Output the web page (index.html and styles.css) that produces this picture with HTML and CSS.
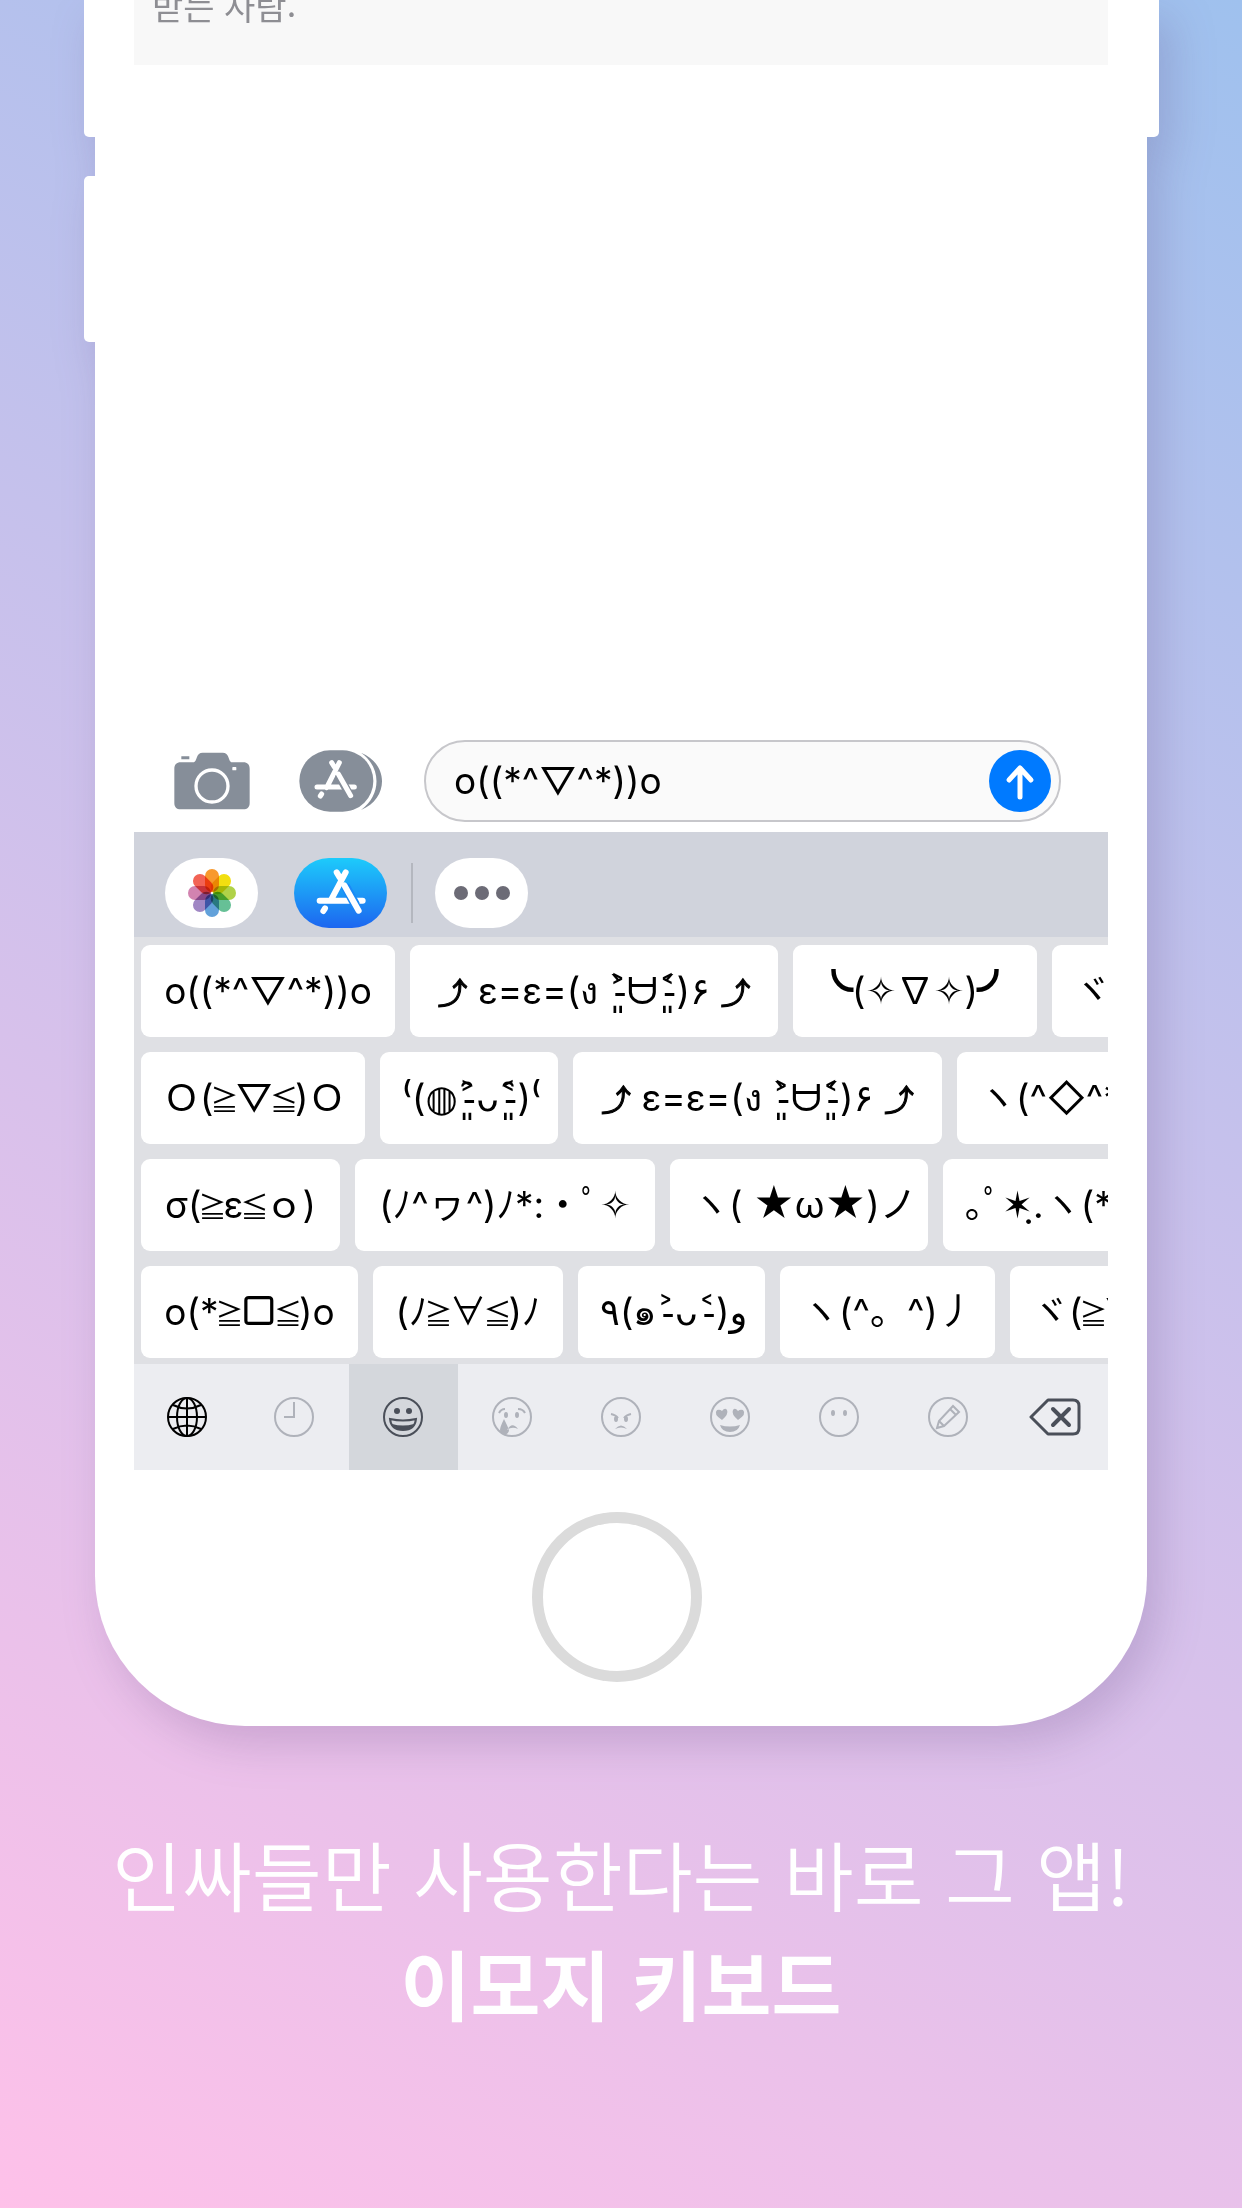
FILE: index.html
```html
<!DOCTYPE html>
<html lang="ko">
<head>
<meta charset="utf-8">
<meta name="viewport" content="width=device-width, initial-scale=1">
<title>이모지 키보드</title>
<link rel="stylesheet" href="styles.css">
</head>
<body>
<main class="promo">
  <section class="phone">
    <span class="side side-left side-top"></span>
    <span class="side side-left side-low"></span>
    <span class="side side-right side-top"></span>
    <div class="screen">
      <header class="recipient">받는 사람:</header>
      <div class="thread"></div>
      <form class="compose">
        <button type="button" class="plain" aria-label="카메라">
          <svg width="76" height="58" viewBox="0 0 228 172">
            <path fill="#868e99" d="M22 12h24v9H22zM20 30h38c6 0 8-8 11-16C72 6 76 1 86 1h60c10 0 14 5 17 13 3 8 5 16 11 16h34c12 0 19 7 19 19v103c0 12-7 19-19 19H20c-12 0-19-7-19-19V49c0-12 7-19 19-19z"/>
            <circle cx="114" cy="101" r="48" fill="none" stroke="#fff" stroke-width="10"/>
            <rect x="175" y="44" width="12" height="10" rx="2" fill="#fff"/>
          </svg>
        </button>
        <button type="button" class="plain" aria-label="앱">
          <svg width="84" height="62" viewBox="0 0 252 186">
            <path fill="#868e99" d="M186 8c84 34 84 138 0 172 62-44 62-128 0-172z"/>
            <rect x="1" y="1" width="222" height="184" rx="92" fill="#868e99"/>
            <g fill="none" stroke="#fff" stroke-width="15" stroke-linecap="round">
              <path d="M121 38L83 113M98 38L106 51M54 111H166M68 132L64 138"/>
              <path stroke="#868e99" stroke-width="25" d="M122 80L148 128"/>
              <path d="M118 72L155 137"/>
            </g>
          </svg>
        </button>
        <div class="field">
          <input type="text" aria-label="메시지" value="o((*^▽^*))o">
          <button type="submit" class="send" aria-label="보내기">
            <svg width="62" height="62" viewBox="0 0 62 62"><path d="M31 47V18M20 30L31 18L42 30" fill="none" stroke="#fff" stroke-width="5" stroke-linecap="round" stroke-linejoin="round"/></svg>
          </button>
        </div>
      </form>
      <nav class="apps">
        <button type="button" class="pill" aria-label="사진">
          <svg width="50" height="50" viewBox="-25 -25 50 50">
            <g class="petals">
              <rect x="-7" y="-24" width="14" height="23" rx="7" fill="#f8992d"/>
              <rect x="-7" y="-24" width="14" height="23" rx="7" fill="#f2df10" transform="rotate(45)"/>
              <rect x="-7" y="-24" width="14" height="23" rx="7" fill="#b0d248" transform="rotate(90)"/>
              <rect x="-7" y="-24" width="14" height="23" rx="7" fill="#66c096" transform="rotate(135)"/>
              <rect x="-7" y="-24" width="14" height="23" rx="7" fill="#62a1da" transform="rotate(180)"/>
              <rect x="-7" y="-24" width="14" height="23" rx="7" fill="#a087c4" transform="rotate(225)"/>
              <rect x="-7" y="-24" width="14" height="23" rx="7" fill="#d283b0" transform="rotate(270)"/>
              <rect x="-7" y="-24" width="14" height="23" rx="7" fill="#f26355" transform="rotate(315)"/>
            </g>
          </svg>
        </button>
        <button type="button" class="pill pill-store" aria-label="App Store">
          <svg width="94" height="70" viewBox="0 0 280 210">
            <g fill="none" stroke="#fff" stroke-width="18" stroke-linecap="round">
              <path d="M154 43L109 128M127 43L136 58M76 128H205M92 151L87 159"/>
              <path stroke="#1b8af6" stroke-width="28" d="M156 90L182 138"/>
              <path d="M150 82L193 158"/>
            </g>
          </svg>
        </button>
        <span class="divider"></span>
        <button type="button" class="pill" aria-label="더 보기">
          <svg width="56" height="14" viewBox="0 0 56 14" fill="#6c6b76"><circle cx="7" cy="7" r="7"/><circle cx="28" cy="7" r="7"/><circle cx="49" cy="7" r="7"/></svg>
        </button>
      </nav>
      <div class="keys">
        <div class="row row-a">
          <button type="button">o((*^▽^*))o</button>
          <button type="button"><b class="arrow">⤴&#xFE0E;</b> ε=ε=(ง <b class="face">˃̵͈̀ᗨ˂̵͈́</b>)۶ <b class="arrow">⤴&#xFE0E;</b></button>
          <button type="button"><b class="arm">╰</b>(✧∇✧)<b class="arm">╯</b></button>
          <button type="button">ヾ(<i>≧</i>∇<i>≦</i>)</button>
        </div>
        <div class="row row-b">
          <button type="button">Ｏ(<i>≧</i>▽<i>≦</i>)Ｏ</button>
          <button type="button">⁽(◍<b class="face">˃̵͈̑ᴗ˂̵͈̑</b>)⁽</button>
          <button type="button"><b class="arrow">⤴&#xFE0E;</b> ε=ε=(ง <b class="face">˃̵͈̀ᗨ˂̵͈́</b>)۶ <b class="arrow">⤴&#xFE0E;</b></button>
          <button type="button">ヽ(^◇^*)/</button>
        </div>
        <div class="row row-c">
          <button type="button">σ(<i>≧</i>ε<i>≦</i>ｏ)</button>
          <button type="button">(ﾉ^ヮ^)ﾉ*:・ﾟ✧</button>
          <button type="button">ヽ( <b class="star">★</b>ω<b class="star">★</b>)ノ</button>
          <button type="button">｡ﾟ✶ฺ.ヽ(*´∀`)</button>
        </div>
        <div class="row row-d">
          <button type="button">o(*<i>≧</i><b class="box">▢</b><i>≦</i>)o</button>
          <button type="button">(ﾉ<i>≧</i>∀<i>≦</i>)ﾉ</button>
          <button type="button">٩(๑<b class="face">˃̵ᴗ˂̵</b>)و</button>
          <button type="button">ヽ(^。^)丿</button>
          <button type="button">ヾ(<i>≧</i>▽<i>≦</i>)</button>
        </div>
      </div>
      <nav class="tabs">
        <button type="button" aria-label="다음 키보드">
          <svg class="icon globe" viewBox="0 0 40 40"><circle cx="20" cy="20" r="19"/><ellipse cx="20" cy="20" rx="10" ry="19"/><path d="M20 1V39M1 20H39M6 8Q20 15 34 8M6 32Q20 25 34 32"/></svg>
        </button>
        <button type="button" aria-label="최근">
          <svg class="icon" viewBox="0 0 40 40"><circle cx="20" cy="20" r="19"/><path d="M20 5V20H10"/></svg>
        </button>
        <button type="button" class="active" aria-label="기쁨">
          <svg class="icon" viewBox="0 0 40 40"><circle cx="20" cy="20" r="19"/><g class="solid"><circle cx="14" cy="14" r="3"/><circle cx="26" cy="14" r="3"/><path d="M9 27Q20 30 31 27Q28 33 20 33T9 27z"/></g><path d="M7 22Q20 25 33 22Q32 33 20 33T7 22z"/></svg>
        </button>
        <button type="button" aria-label="슬픔">
          <svg class="icon" viewBox="0 0 40 40"><circle cx="20" cy="20" r="19"/><g class="solid"><ellipse cx="14" cy="18" rx="2" ry="3"/><ellipse cx="25" cy="18" rx="2" ry="3"/><path d="M12 22Q8 30 8 33A4 4 0 0 0 17 33Q16 30 12 22zM15 33Q20 24 26 32Q20 29 15 33z"/></g><path d="M7 16Q9 12 13 12M26 12Q31 12 33 16"/></svg>
        </button>
        <button type="button" aria-label="화남">
          <svg class="icon" viewBox="0 0 40 40"><circle cx="20" cy="20" r="19"/><g class="solid"><ellipse cx="15" cy="22" rx="2" ry="3"/><ellipse cx="25" cy="22" rx="2" ry="3"/><path d="M14 32Q20 25 26 32Q20 29 14 32z"/></g><path d="M10 17Q15 18 17 21M30 17Q25 18 23 21"/></svg>
        </button>
        <button type="button" aria-label="사랑">
          <svg class="icon" viewBox="0 0 40 40"><circle cx="20" cy="20" r="19"/><g class="solid"><path d="M12 23Q3 17 7 13Q10 12 12 14Q15 10 17 13Q19 17 12 23zM28 23Q37 17 33 13Q30 12 28 14Q25 10 23 13Q21 17 28 23zM10 28Q20 31 30 28Q28 35 20 35T10 28z"/></g></svg>
        </button>
        <button type="button" aria-label="무표정">
          <svg class="icon" viewBox="0 0 40 40"><circle cx="20" cy="20" r="19"/><g class="solid"><ellipse cx="14" cy="16" rx="2" ry="3"/><ellipse cx="26" cy="16" rx="2" ry="3"/></g></svg>
        </button>
        <button type="button" aria-label="편집">
          <svg class="icon" viewBox="0 0 40 40"><circle cx="20" cy="20" r="19"/><path d="M9 31L11 24L25 9L31 15L16 29ZM22 12L28 18M11 24L16 29"/></svg>
        </button>
        <button type="button" aria-label="지우기">
          <svg class="erase" viewBox="0 0 52 38"><path d="M19 2H44Q50 2 50 8V30Q50 36 44 36H19L2 19Z"/><path stroke-width="4" stroke-linecap="round" d="M24 11L40 27M40 11L24 27"/></svg>
        </button>
      </nav>
    </div>
    <div class="chin"><span class="home"></span></div>
  </section>
  <h1 class="caption">인싸들만 사용한다는 바로 그 앱!<strong>이모지 키보드</strong></h1>
</main>
</body>
</html>
```
FILE: styles.css
```css
* { box-sizing: border-box; }

body {
  margin: 0;
  min-height: 100vh;
  background: linear-gradient(28deg, #fec1e9, #9fc1ee);
  font-family: Inter, "Noto Sans CJK KR", sans-serif;
}

button {
  margin: 0;
  padding: 0;
  border: 0;
  background: none;
  color: inherit;
  font: inherit;
}

svg { display: block; }

.promo { overflow: hidden; min-height: 100vh; }

.phone {
  position: relative;
  margin: 0 95px;
  padding: 0 39px;
  border-radius: 0 0 150px 150px;
  background: #fff;
  filter: drop-shadow(12px 18px 22px rgba(80, 50, 110, 0.2));
}

/* hardware buttons on the phone's edges */
.side { position: absolute; width: 12px; background: #fff; }
.side-left { left: -11px; border-radius: 5px 0 0 5px; }
.side-right { right: -12px; border-radius: 0 0 5px 0; }
.side-top { top: 0; height: 137px; }
.side-left.side-top { border-top-left-radius: 0; }
.side-low { top: 176px; height: 166px; }

.screen { overflow: hidden; }

.recipient {
  display: flex;
  align-items: flex-end;
  height: 65px;
  padding: 0 18px 41px;
  background: #f8f8f8;
  color: #8e8e93;
  font: 34px/36px "Noto Sans CJK KR", sans-serif;
}

.thread { height: 675px; }

.compose {
  display: flex;
  align-items: center;
  gap: 49px;
  margin: 0;
  padding: 0 47px 10px 40px;
}

.field {
  display: flex;
  flex: 1;
  align-items: center;
  min-width: 0;
  height: 82px;
  margin-left: -8px;
  padding: 0 8px 0 28px;
  border: 2px solid #c7c7cb;
  border-radius: 41px;
  background: #fafafa;
}

.field input {
  flex: 1;
  min-width: 0;
  padding: 0;
  border: 0;
  outline: 0;
  background: none;
  color: #000;
  font: 37px/48px Inter, "Noto Sans CJK JP", "DejaVu Sans", sans-serif;
}

.send { border-radius: 50%; background: #007aff; }

.apps {
  display: flex;
  align-items: center;
  height: 105px;
  padding: 16px 31px 0;
  background: #d0d3dc;
}

.pill {
  display: grid;
  place-items: center;
  width: 93px;
  height: 70px;
  border-radius: 35px;
  background: #fff;
}
.pill-store { margin-left: 36px; background: linear-gradient(#1dcbfb, #1d66f0); }
.petals rect { mix-blend-mode: multiply; }
.divider { width: 2px; height: 60px; margin: 0 22px 0 24px; background: #b4b7bf; }

.keys {
  display: grid;
  gap: 15px;
  padding: 8px 7px 6px;
  background: #dfe0e4;
}

.row { display: grid; gap: 15px; }
.row-a { grid-template-columns: 254px 368px 244px 254px; }
.row-b { grid-template-columns: 224px 178px 369px 254px; }
.row-c { grid-template-columns: 199px 300px 258px 300px; }
.row-d { grid-template-columns: 217px 190px 187px 215px 254px; }

.row button {
  overflow: hidden;
  height: 92px;
  padding: 0 22px;
  border-radius: 9px;
  background: #fff;
  color: #000;
  font: 37px/48px Inter, "Noto Sans CJK JP", "DejaVu Sans", sans-serif;
  white-space: nowrap;
}
.row button:last-child { text-align: left; }

/* signs whose fallback glyphs differ in size from the letters round them */
.row i { margin: 0 -3px; font-size: 28px; font-style: normal; line-height: 1; }
.row b { font-weight: 400; line-height: 1; }
.row .face { font-family: "DejaVu Sans", sans-serif; }
.arrow { font-size: 30px; -webkit-text-stroke: 1px #000; }
.arm { -webkit-text-stroke: 3px #000; }
.star { font-size: 40px; }
.row .box { font-size: 40px; }

.tabs {
  display: grid;
  grid-template-columns: 106px repeat(7, 1fr) 106px;
  height: 106px;
  background: #ecedf1;
  color: #afb2ba;
}
.tabs button { display: grid; place-items: center; }
.tabs .active { background: #d4d7dc; color: #4a4f59; }

.icon { width: 40px; height: 40px; fill: none; stroke: currentColor; stroke-width: 2; }
.globe { color: #000; }
.solid { fill: currentColor; stroke: none; }
.erase { width: 52px; height: 38px; fill: none; stroke: #4a4f59; stroke-width: 3; stroke-linejoin: round; }

.chin { padding: 42px 8px 44px 0; }

.home {
  display: block;
  width: 170px;
  height: 170px;
  margin: 0 auto;
  border: 11px solid #dbdbdb;
  border-radius: 50%;
}

.caption {
  margin: 0;
  padding: 93px 20px 100px;
  color: #fff;
  font: 350 76px/109px "Noto Sans CJK KR", sans-serif;
  text-align: center;
}
.caption strong { display: block; font-weight: 700; }
```
